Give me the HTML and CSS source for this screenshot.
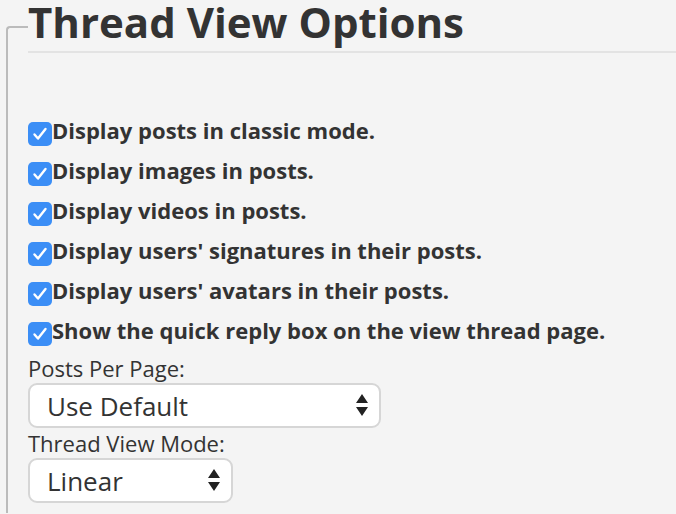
FILE: index.html
```html
<!DOCTYPE html>
<html lang="en">
<head>
    <meta charset="UTF-8">
    <meta name="viewport" content="width=device-width, initial-scale=1.0">
    <title>Thread View Options</title>
    <link rel="stylesheet" href="styles.css">
</head>
<body>
    <fieldset class="options">
        <legend>Thread View Options</legend>

        <div class="checks">
            <label class="check-row">
                <span class="check"><svg viewBox="0 0 24 24"><path d="M6.5 12.5 L10 16.5 L17.5 7" /></svg></span>
                Display posts in classic mode.
            </label>
            <label class="check-row">
                <span class="check"><svg viewBox="0 0 24 24"><path d="M6.5 12.5 L10 16.5 L17.5 7" /></svg></span>
                Display images in posts.
            </label>
            <label class="check-row">
                <span class="check"><svg viewBox="0 0 24 24"><path d="M6.5 12.5 L10 16.5 L17.5 7" /></svg></span>
                Display videos in posts.
            </label>
            <label class="check-row">
                <span class="check"><svg viewBox="0 0 24 24"><path d="M6.5 12.5 L10 16.5 L17.5 7" /></svg></span>
                Display users' signatures in their posts.
            </label>
            <label class="check-row">
                <span class="check"><svg viewBox="0 0 24 24"><path d="M6.5 12.5 L10 16.5 L17.5 7" /></svg></span>
                Display users' avatars in their posts.
            </label>
            <label class="check-row">
                <span class="check"><svg viewBox="0 0 24 24"><path d="M6.5 12.5 L10 16.5 L17.5 7" /></svg></span>
                Show the quick reply box on the view thread page.
            </label>
        </div>

        <label class="field-label first" for="ppp">Posts Per Page:</label>
        <div class="select-wrap wide">
            <select id="ppp">
                <option>Use Default</option>
            </select>
            <svg class="arrows" viewBox="0 0 12 22"><path d="M6 0 L12 9 L0 9 Z M0 13 L12 13 L6 22 Z" /></svg>
        </div>

        <label class="field-label" for="mode">Thread View Mode:</label>
        <div class="select-wrap narrow">
            <select id="mode">
                <option>Linear</option>
            </select>
            <svg class="arrows" viewBox="0 0 12 22"><path d="M6 0 L12 9 L0 9 Z M0 13 L12 13 L6 22 Z" /></svg>
        </div>
    </fieldset>
</body>
</html>
```

FILE: styles.css
```css
html, body {
    overflow: hidden;
}

body {
    margin: 0;
    background: #f4f4f4;
    color: #333;
    font-family: 'Open Sans', Arial, sans-serif;
}

.options {
    margin: 0 0 0 6px;
    padding: 0 0 10px 20px;
    border: 2px solid #bbb;
    border-right: none;
    border-bottom: none;
    border-radius: 4px 0 0 0;
}

.options legend {
    width: 100%;
    padding: 0 0 7px 0;
    font-size: 42px;
    font-weight: bold;
    line-height: 44px;
    border-bottom: 2px solid #e3e3e3;
}

.checks {
    padding-top: 57px;
}

.check-row {
    display: flex;
    align-items: center;
    height: 40px;
    font-size: 22px;
    font-weight: bold;
}

.check {
    width: 24px;
    height: 24px;
    border-radius: 5px;
    background: #3b8ef6;
    display: flex;
    align-items: center;
    justify-content: center;
    margin-top: 8px;
}

.check svg {
    width: 24px;
    height: 24px;
    fill: none;
    stroke: #fff;
    stroke-width: 2.4;
    stroke-linecap: round;
    stroke-linejoin: round;
}

.field-label {
    display: block;
    font-size: 22px;
    line-height: 30px;
}

.field-label.first {
    margin-top: 3px;
}

.select-wrap {
    position: relative;
}

.select-wrap.wide {
    width: 353px;
}

.select-wrap.narrow {
    width: 205px;
}

.select-wrap select {
    appearance: none;
    -webkit-appearance: none;
    display: block;
    width: 100%;
    height: 45px;
    padding: 0 0 0 17px;
    font-family: 'Open Sans', Arial, sans-serif;
    font-size: 26px;
    color: #333;
    background: #fff;
    border: 2px solid #d6d6d6;
    border-radius: 9px;
}

.arrows {
    position: absolute;
    right: 13px;
    top: 11px;
    width: 12px;
    height: 22px;
    fill: #222;
    pointer-events: none;
}
```
